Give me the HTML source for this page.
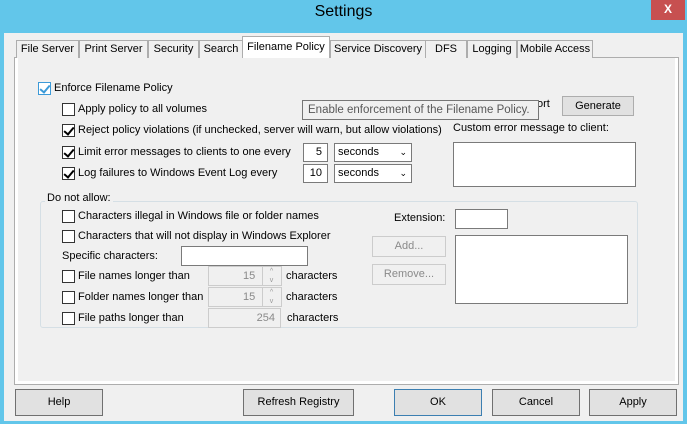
<!DOCTYPE html>
<html><head><style>
*{box-sizing:border-box;margin:0;padding:0}
body{width:687px;height:424px;background:#62c6ea;font-family:"Liberation Sans",sans-serif;font-size:11px;line-height:15px;color:#000;position:relative;overflow:hidden}
.a{position:absolute;white-space:nowrap}
.t{margin-top:0px}
.cb{position:absolute;width:13px;height:13px;border:1px solid #333;background:#fff}
.cb.on::after{content:"";position:absolute;left:3px;top:0px;width:4px;height:8px;border:solid #000;border-width:0 2px 2px 0;transform:rotate(40deg)}
.cb.blue{border-color:#3c9ad8}
.cb.blue::after{border-color:#3c9ad8}
.in{position:absolute;background:#fff;border:1px solid #7a7a7a}
.btn{position:absolute;background:#e1e1e1;border:1px solid #adadad;text-align:center;line-height:24px}
.tab{position:absolute;top:40px;height:18px;border:1px solid #adadad;border-bottom:none;background:#f0f0f0;text-align:center;line-height:16px}
.dis{color:#8a8a8a}
</style></head><body>
<div class="a" style="left:0;top:0;width:687px;height:33px;text-align:center;font-size:16px;line-height:23px;color:#000">Settings</div>
<div class="a" style="left:651px;top:0;width:34px;height:20px;background:#c75050;color:#fff;font-weight:bold;text-align:center;line-height:18px;font-size:12px">X</div>
<div class="a" style="left:4px;top:33px;width:679px;height:388px;background:#f0f0f0"></div>
<div class="a" style="left:14px;top:57px;width:665px;height:328px;border:1px solid #adadad;background:#fff"></div>
<div class="a" style="left:18px;top:58px;width:657px;height:323px;background:#f0f0f0"></div>
<div class="tab" style="left:16px;width:63px">File Server</div>
<div class="tab" style="left:79px;width:69px">Print Server</div>
<div class="tab" style="left:148px;width:51px">Security</div>
<div class="tab" style="left:199px;width:44px">Search</div>
<div class="tab" style="left:242px;top:36px;height:22px;width:88px;background:#fff;line-height:20px">Filename Policy</div>
<div class="tab" style="left:330px;width:96px">Service Discovery</div>
<div class="tab" style="left:425px;width:42px">DFS</div>
<div class="tab" style="left:467px;width:50px">Logging</div>
<div class="tab" style="left:517px;width:76px">Mobile Access</div>

<div class="cb on blue" style="left:38px;top:82px"></div><div class="a" style="left:54px;top:81px">Enforce Filename Policy</div>
<div class="cb" style="left:62px;top:103px"></div><div class="a" style="left:78px;top:102px">Apply policy to all volumes</div>
<div class="cb on" style="left:62px;top:124px"></div><div class="a" style="left:78px;top:123px">Reject policy violations (if unchecked, server will warn, but allow violations)</div>
<div class="cb on" style="left:62px;top:146px"></div><div class="a" style="left:78px;top:145px">Limit error messages to clients to one every</div>
<div class="cb on" style="left:62px;top:167px"></div><div class="a" style="left:78px;top:166px">Log failures to Windows Event Log every</div>
<div class="in" style="left:303px;top:143px;width:25px;height:19px;text-align:right;padding-right:5px;line-height:17px">5</div>
<div class="in" style="left:334px;top:143px;width:78px;height:19px;padding-left:3px;line-height:17px">seconds<span class="a" style="right:4px;top:0;font-size:9px">&#8964;</span></div>
<div class="in" style="left:303px;top:164px;width:25px;height:19px;text-align:right;padding-right:5px;line-height:17px">10</div>
<div class="in" style="left:334px;top:164px;width:78px;height:19px;padding-left:3px;line-height:17px">seconds<span class="a" style="right:4px;top:0;font-size:9px">&#8964;</span></div>
<div class="a" style="left:537px;top:97px">ort</div>
<div class="a" style="left:302px;top:100px;width:237px;height:20px;border:1px solid #767676;background:#f0f0f0;color:#575757;padding-left:5px;line-height:18px;font-size:11.5px">Enable enforcement of the Filename Policy.</div>
<div class="btn" style="left:562px;top:96px;width:72px;height:20px;line-height:18px">Generate</div>
<div class="a" style="left:453px;top:121px">Custom error message to client:</div>
<div class="in" style="left:453px;top:142px;width:183px;height:45px"></div>

<div class="a" style="left:40px;top:201px;width:598px;height:127px;border:1px solid #d5dfe5;border-radius:3px"></div>
<div class="a" style="left:45px;top:191px;background:#f0f0f0;padding:0 2px">Do not allow:</div>
<div class="cb" style="left:62px;top:210px"></div><div class="a" style="left:78px;top:209px">Characters illegal in Windows file or folder names</div>
<div class="cb" style="left:62px;top:230px"></div><div class="a" style="left:78px;top:229px">Characters that will not display in Windows Explorer</div>
<div class="a" style="left:62px;top:249px">Specific characters:</div>
<div class="in" style="left:181px;top:246px;width:127px;height:20px"></div>
<div class="cb" style="left:62px;top:270px"></div><div class="a" style="left:78px;top:269px">File names longer than</div>
<div class="cb" style="left:62px;top:291px"></div><div class="a" style="left:78px;top:290px">Folder names longer than</div>
<div class="cb" style="left:62px;top:312px"></div><div class="a" style="left:78px;top:311px">File paths longer than</div>
<div class="in dis" style="left:208px;top:266px;width:74px;height:20px;border-color:#ccc;background:#f0f0f0;line-height:18px;padding-left:34px">15</div>
<div class="in dis" style="left:208px;top:287px;width:74px;height:20px;border-color:#ccc;background:#f0f0f0;line-height:18px;padding-left:34px">15</div>
<div class="a" style="left:262px;top:267px;width:18px;height:18px;border-left:1px solid #ccc;font-size:7px;color:#999;text-align:center;line-height:9px">^<br>v</div>
<div class="a" style="left:262px;top:288px;width:18px;height:18px;border-left:1px solid #ccc;font-size:7px;color:#999;text-align:center;line-height:9px">^<br>v</div>
<div class="in dis" style="left:208px;top:308px;width:73px;height:20px;border-color:#ccc;background:#f0f0f0;line-height:18px;text-align:right;padding-right:5px">254</div>
<div class="a" style="left:286px;top:269px">characters</div>
<div class="a" style="left:286px;top:290px">characters</div>
<div class="a" style="left:287px;top:311px">characters</div>
<div class="a" style="left:394px;top:211px">Extension:</div>
<div class="in" style="left:455px;top:209px;width:53px;height:20px"></div>
<div class="btn dis" style="left:372px;top:236px;width:74px;height:21px;line-height:19px;border-color:#ccc;background:#f0f0f0">Add...</div>
<div class="btn dis" style="left:372px;top:264px;width:74px;height:21px;line-height:19px;border-color:#ccc;background:#f0f0f0">Remove...</div>
<div class="in" style="left:455px;top:235px;width:173px;height:69px"></div>

<div class="btn" style="left:15px;top:389px;width:88px;height:27px;border-color:#707070">Help</div>
<div class="btn" style="left:243px;top:389px;width:111px;height:27px;border-color:#707070">Refresh Registry</div>
<div class="btn" style="left:394px;top:389px;width:88px;height:27px;border-color:#3c7fb1">OK</div>
<div class="btn" style="left:492px;top:389px;width:88px;height:27px;border-color:#707070">Cancel</div>
<div class="btn" style="left:589px;top:389px;width:88px;height:27px;border-color:#707070">Apply</div>
</body></html>
